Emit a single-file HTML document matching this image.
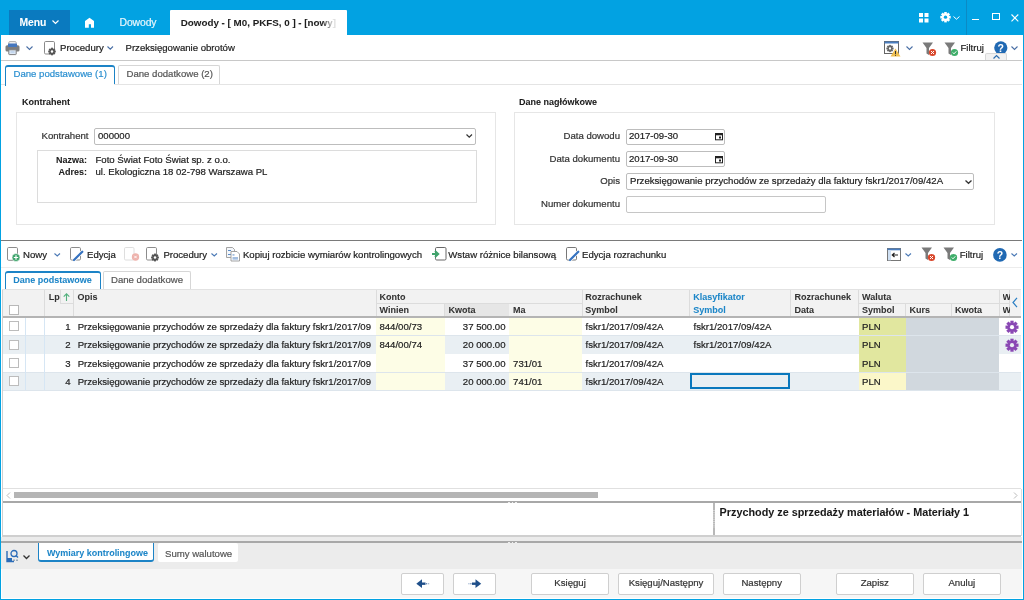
<!DOCTYPE html>
<html><head><meta charset="utf-8">
<style>
*{margin:0;padding:0;box-sizing:border-box}
html,body{width:1024px;height:600px;overflow:hidden;background:#fff}
body{font-family:"Liberation Sans",sans-serif;font-size:9.6px;color:#222;position:relative;-webkit-font-smoothing:antialiased}
.a{position:absolute}
.t{position:absolute;white-space:nowrap;line-height:12px;-webkit-text-stroke:0.2px currentColor}
.b{font-weight:bold;-webkit-text-stroke:0.05px currentColor}
svg{position:absolute;overflow:visible}
</style></head><body>
<div style="position:absolute;left:0;top:0;width:1024px;height:600px;overflow:hidden;background:#fff;will-change:transform">
<div class="a" style="left:0px;top:0px;width:1024px;height:35px;background:#02a2e2"></div>
<div class="a" style="left:9px;top:10px;width:61px;height:25px;background:#0a7abf"></div>
<div class="t b" style="left:19.5px;top:17px;font-size:10.4px;color:#fff;letter-spacing:-0.1px">Menu</div>
<svg style="left:52px;top:19.5px;" width="7" height="4.5" viewBox="0 0 7 4.5"><path d="M0.5 0.5L3.5 3.5L6.5 0.5" fill="none" stroke="#fff" stroke-width="1.2"/></svg>
<svg style="left:84px;top:17px;" width="12" height="12" viewBox="0 0 12 12"><path d="M1 4L5.5 0.7L10 4V10.8H7V7.2H4.8V10.8H1Z" fill="#fff"/></svg>
<div class="t" style="left:119.5px;top:17px;font-size:10.4px;color:#e8f6fc;letter-spacing:-0.1px">Dowody</div>
<div class="a" style="left:170px;top:10px;width:177px;height:25px;background:#fff;border-radius:1px 1px 0 0"></div>
<div class="t b" style="left:180.8px;top:17px;font-size:9.8px;color:#1e1e1e;width:158px;overflow:hidden;">Dowody - [ M0, PKFS, 0 ] - [nowy]</div>
<div class="a" style="left:322px;top:14px;width:14px;height:16px;background:linear-gradient(90deg,rgba(255,255,255,0),rgba(255,255,255,0.85) 80%)"></div>
<svg style="left:919px;top:13px;" width="10" height="10" viewBox="0 0 10 10"><rect x="0" y="0" width="4" height="4" fill="#fff"/><rect x="5.5" y="0" width="4" height="4" fill="#fff"/><rect x="0" y="5.5" width="4" height="4" fill="#fff"/><rect x="5.5" y="5.5" width="4" height="4" fill="#fff"/></svg>
<svg style="left:939px;top:11px;" width="14" height="14" viewBox="0 0 14 14"><circle cx="6.5" cy="6.2" r="3.64" fill="#fff"/><rect x="5.20" y="1.00" width="2.60" height="5.20" fill="#fff" transform="rotate(0.0 6.5 6.2)"/><rect x="5.20" y="1.00" width="2.60" height="5.20" fill="#fff" transform="rotate(45.0 6.5 6.2)"/><rect x="5.20" y="1.00" width="2.60" height="5.20" fill="#fff" transform="rotate(90.0 6.5 6.2)"/><rect x="5.20" y="1.00" width="2.60" height="5.20" fill="#fff" transform="rotate(135.0 6.5 6.2)"/><rect x="5.20" y="1.00" width="2.60" height="5.20" fill="#fff" transform="rotate(180.0 6.5 6.2)"/><rect x="5.20" y="1.00" width="2.60" height="5.20" fill="#fff" transform="rotate(225.0 6.5 6.2)"/><rect x="5.20" y="1.00" width="2.60" height="5.20" fill="#fff" transform="rotate(270.0 6.5 6.2)"/><rect x="5.20" y="1.00" width="2.60" height="5.20" fill="#fff" transform="rotate(315.0 6.5 6.2)"/><circle cx="6.5" cy="6.2" r="1.66" fill="#02a2e2"/></svg>
<svg style="left:953px;top:15.7px;" width="7" height="4.2" viewBox="0 0 7 4.2"><path d="M0.5 0.5L3.5 3.2L6.5 0.5" fill="none" stroke="#fff" stroke-width="1"/></svg>
<div class="a" style="left:966px;top:0px;width:1px;height:35px;background:#0b8ac4"></div>
<div class="a" style="left:972px;top:19px;width:7px;height:1.3px;background:#fff"></div>
<div class="a" style="left:992px;top:13px;width:7.5px;height:7px;border:1.2px solid #fff"></div>
<svg style="left:1011px;top:14px;" width="8" height="8" viewBox="0 0 8 8"><path d="M0.5 0.5L7.3 7.3M7.3 0.5L0.5 7.3" stroke="#fff" stroke-width="1.1"/></svg>
<svg style="left:5px;top:41px;" width="15" height="14" viewBox="0 0 15 14"><rect x="3.8" y="0.6" width="7.4" height="5" rx="1" fill="#f2f2f2" stroke="#9a9a9a" stroke-width="0.8"/><rect x="0.5" y="4.2" width="14" height="6.3" rx="1.6" fill="#7d7d7d"/><rect x="3" y="2.4" width="9" height="3.6" rx="0.6" fill="#4677bd"/><rect x="3.8" y="8.8" width="7.4" height="4.8" rx="0.6" fill="#dce8f6" stroke="#7d7d7d" stroke-width="1"/><rect x="5.5" y="10.6" width="4" height="0.8" fill="#9fbbe0"/></svg>
<svg style="left:26px;top:46px;" width="7" height="4.5" viewBox="0 0 7 4.5"><path d="M0.5 0.5L3.5 3.5L6.5 0.5" fill="none" stroke="#4a6fa5" stroke-width="1.1"/></svg>
<svg style="left:43.5px;top:41px;" width="11" height="13.5" viewBox="0 0 11 13.5"><rect x="0.5" y="0.5" width="10" height="12.5" rx="1.2" fill="#fff" stroke="#8a8a8a" stroke-width="1.0"/></svg>
<svg style="left:47px;top:47px;" width="10" height="10" viewBox="0 0 10 10"><circle cx="5" cy="4.5" r="2.66" fill="#555"/><rect x="4.05" y="0.70" width="1.90" height="3.80" fill="#555" transform="rotate(0.0 5 4.5)"/><rect x="4.05" y="0.70" width="1.90" height="3.80" fill="#555" transform="rotate(45.0 5 4.5)"/><rect x="4.05" y="0.70" width="1.90" height="3.80" fill="#555" transform="rotate(90.0 5 4.5)"/><rect x="4.05" y="0.70" width="1.90" height="3.80" fill="#555" transform="rotate(135.0 5 4.5)"/><rect x="4.05" y="0.70" width="1.90" height="3.80" fill="#555" transform="rotate(180.0 5 4.5)"/><rect x="4.05" y="0.70" width="1.90" height="3.80" fill="#555" transform="rotate(225.0 5 4.5)"/><rect x="4.05" y="0.70" width="1.90" height="3.80" fill="#555" transform="rotate(270.0 5 4.5)"/><rect x="4.05" y="0.70" width="1.90" height="3.80" fill="#555" transform="rotate(315.0 5 4.5)"/><circle cx="5" cy="4.5" r="1.22" fill="#fff"/></svg>
<div class="t" style="left:60px;top:42px;font-size:9.6px;color:#222;">Procedury</div>
<svg style="left:107px;top:46px;" width="6.5" height="4.2" viewBox="0 0 6.5 4.2"><path d="M0.5 0.5L3.25 3.2L6.0 0.5" fill="none" stroke="#4a6fa5" stroke-width="1.1"/></svg>
<div class="t" style="left:125.5px;top:42px;font-size:9.6px;color:#222;">Przeksięgowanie obrotów</div>
<svg style="left:884px;top:41px;" width="18" height="16" viewBox="0 0 18 16"><rect x="0.5" y="0.5" width="14" height="12" fill="#fff" stroke="#666" stroke-width="1"/><rect x="0.5" y="0.5" width="14" height="2" fill="#4a7ec0"/><circle cx="6" cy="7.5" r="2.52" fill="#666"/><rect x="5.10" y="3.90" width="1.80" height="3.60" fill="#666" transform="rotate(0.0 6 7.5)"/><rect x="5.10" y="3.90" width="1.80" height="3.60" fill="#666" transform="rotate(45.0 6 7.5)"/><rect x="5.10" y="3.90" width="1.80" height="3.60" fill="#666" transform="rotate(90.0 6 7.5)"/><rect x="5.10" y="3.90" width="1.80" height="3.60" fill="#666" transform="rotate(135.0 6 7.5)"/><rect x="5.10" y="3.90" width="1.80" height="3.60" fill="#666" transform="rotate(180.0 6 7.5)"/><rect x="5.10" y="3.90" width="1.80" height="3.60" fill="#666" transform="rotate(225.0 6 7.5)"/><rect x="5.10" y="3.90" width="1.80" height="3.60" fill="#666" transform="rotate(270.0 6 7.5)"/><rect x="5.10" y="3.90" width="1.80" height="3.60" fill="#666" transform="rotate(315.0 6 7.5)"/><circle cx="6" cy="7.5" r="1.15" fill="#fff"/><path d="M11.5 7.5L16.5 15.5H6.5Z" fill="#f0c050"/><rect x="11" y="10" width="1" height="3" fill="#333"/><rect x="11" y="13.8" width="1" height="1" fill="#333"/></svg>
<svg style="left:906px;top:46px;" width="7" height="4.5" viewBox="0 0 7 4.5"><path d="M0.5 0.5L3.5 3.5L6.5 0.5" fill="none" stroke="#4a6fa5" stroke-width="1.1"/></svg>
<svg style="left:922px;top:41.5px;" width="15" height="15" viewBox="0 0 15 15"><path d="M0.5 0.5H11L7 6V13L4.5 11.5V6Z" fill="#7a7a7a"/><circle cx="10.5" cy="10.5" r="3.6" fill="#d9472b"/><path d="M9 9L12 12M12 9L9 12" stroke="#fff" stroke-width="1"/></svg>
<svg style="left:944px;top:41.5px;" width="15" height="15" viewBox="0 0 15 15"><path d="M0.5 0.5H11L7 6V13L4.5 11.5V6Z" fill="#7a7a7a"/><circle cx="10.5" cy="10.5" r="3.6" fill="#3fae6a"/><path d="M8.8 10.5L10 11.8L12.3 9.3" fill="none" stroke="#fff" stroke-width="1"/></svg>
<div class="t" style="left:960.5px;top:42px;font-size:9.6px;color:#222;">Filtruj</div>
<svg style="left:994px;top:41px;" width="14" height="14" viewBox="0 0 14 14"><circle cx="6.8" cy="6.8" r="6.6" fill="#2069b3"/><text x="6.8" y="10.6" font-family="Liberation Sans" font-weight="bold" font-size="10.5" fill="#fff" text-anchor="middle">?</text></svg>
<svg style="left:1011px;top:46px;" width="7" height="4.5" viewBox="0 0 7 4.5"><path d="M0.5 0.5L3.5 3.5L6.5 0.5" fill="none" stroke="#4a6fa5" stroke-width="1.1"/></svg>
<div class="a" style="left:985px;top:52.5px;width:22px;height:8px;background:#f2f2f2;border:1px solid #d8d8d8;border-bottom:none;border-radius:2px 2px 0 0"></div>
<svg style="left:992.5px;top:54.5px;" width="7" height="4" viewBox="0 0 7 4"><path d="M0.5 3.5L3.5 0.5L6.5 3.5" fill="none" stroke="#2f6fb0" stroke-width="1.2"/></svg>
<div class="a" style="left:1px;top:60px;width:1021px;height:1px;background:#c8c8c8"></div>
<div class="a" style="left:4.5px;top:64.5px;width:110px;height:19.5px;background:#fff;border:1px solid #1c83c6;border-top:2px solid #1c83c6;border-bottom:none;border-radius:3px 3px 0 0"></div>
<div class="t" style="left:13.5px;top:68px;font-size:9.6px;color:#2a8fd0;">Dane podstawowe (1)</div>
<div class="a" style="left:118px;top:64.5px;width:101.5px;height:19.5px;background:#fff;border:1px solid #d6d6d6;border-bottom:none;border-radius:2px 2px 0 0"></div>
<div class="t" style="left:126.5px;top:68px;font-size:9.6px;color:#555;">Dane dodatkowe (2)</div>
<div class="a" style="left:1px;top:84px;width:1021px;height:155px;background:#fff;border-top:1px solid #e4e4e4"></div>
<div class="a" style="left:5.5px;top:83.5px;width:108px;height:1.5px;background:#fff"></div>
<div class="a" style="left:4.5px;top:84px;width:1px;height:2px;background:#1c83c6"></div>
<div class="t b" style="left:22px;top:96px;font-size:9px;color:#1a1a1a;">Kontrahent</div>
<div class="a" style="left:16px;top:112px;width:480px;height:113px;border:1px solid #e6e6e6"></div>
<div class="t" style="left:8.5px;top:130px;width:80px;text-align:right;font-size:9.6px;color:#333;">Kontrahent</div>
<div class="a" style="left:94px;top:127.5px;width:382px;height:17px;border:1px solid #bdbdbd;border-radius:2px;background:#fff"></div>
<div class="t" style="left:98px;top:130px;font-size:9.6px;color:#222;">000000</div>
<svg style="left:466px;top:134px;" width="6.5" height="4.2" viewBox="0 0 6.5 4.2"><path d="M0.5 0.5L3.25 3.2L6.0 0.5" fill="none" stroke="#333" stroke-width="1.2"/></svg>
<div class="a" style="left:37px;top:150px;width:440px;height:53px;border:1px solid #dcdcdc"></div>
<div class="t b" style="left:27px;top:154px;width:60px;text-align:right;font-size:9px;color:#222;">Nazwa:</div>
<div class="t b" style="left:27px;top:166px;width:60px;text-align:right;font-size:9px;color:#222;">Adres:</div>
<div class="t" style="left:95.5px;top:154px;font-size:9.6px;color:#222;">Foto Świat Foto Świat sp. z o.o.</div>
<div class="t" style="left:95.5px;top:166px;font-size:9.6px;color:#222;">ul. Ekologiczna 18 02-798 Warszawa PL</div>
<div class="t b" style="left:519px;top:96px;font-size:9px;color:#1a1a1a;">Dane nagłówkowe</div>
<div class="a" style="left:513.5px;top:112px;width:481.5px;height:113px;border:1px solid #e6e6e6"></div>
<div class="t" style="left:520px;top:130px;width:100px;text-align:right;font-size:9.6px;color:#333;">Data dowodu</div>
<div class="t" style="left:520px;top:153px;width:100px;text-align:right;font-size:9.6px;color:#333;">Data dokumentu</div>
<div class="t" style="left:520px;top:175px;width:100px;text-align:right;font-size:9.6px;color:#333;">Opis</div>
<div class="t" style="left:520px;top:198px;width:100px;text-align:right;font-size:9.6px;color:#333;">Numer dokumentu</div>
<div class="a" style="left:625.5px;top:128.5px;width:99.5px;height:16px;border:1px solid #bdbdbd;border-radius:2px"></div>
<div class="t" style="left:629px;top:130px;font-size:9.6px;color:#222;">2017-09-30</div>
<svg style="left:714.5px;top:133px;" width="8" height="7" viewBox="0 0 8 7"><rect x="0.5" y="0.5" width="7" height="6.3" fill="none" stroke="#222" stroke-width="1"/><rect x="0.5" y="0.5" width="7" height="1.8" fill="#222"/><rect x="4" y="3.5" width="2" height="2" fill="#222"/></svg>
<div class="a" style="left:625.5px;top:151px;width:99.5px;height:16px;border:1px solid #bdbdbd;border-radius:2px"></div>
<div class="t" style="left:629px;top:153px;font-size:9.6px;color:#222;">2017-09-30</div>
<svg style="left:714.5px;top:155.5px;" width="8" height="7" viewBox="0 0 8 7"><rect x="0.5" y="0.5" width="7" height="6.3" fill="none" stroke="#222" stroke-width="1"/><rect x="0.5" y="0.5" width="7" height="1.8" fill="#222"/><rect x="4" y="3.5" width="2" height="2" fill="#222"/></svg>
<div class="a" style="left:626px;top:172.5px;width:348px;height:17px;border:1px solid #bdbdbd;border-radius:2px"></div>
<div class="t" style="left:630px;top:175px;font-size:9.6px;color:#222;">Przeksięgowanie przychodów ze sprzedaży dla faktury fskr1/2017/09/42A</div>
<svg style="left:964.5px;top:179.5px;" width="7" height="4.3" viewBox="0 0 7 4.3"><path d="M0.5 0.5L3.5 3.3L6.5 0.5" fill="none" stroke="#333" stroke-width="1.3"/></svg>
<div class="a" style="left:626px;top:195.5px;width:200px;height:17px;border:1px solid #c6c6c6;border-radius:2px"></div>
<div class="a" style="left:1px;top:239.5px;width:1021px;height:1.5px;background:#7a7a7a"></div>
<svg style="left:7px;top:247px;" width="16" height="15" viewBox="0 0 16 15"><rect x="0.5" y="0.5" width="10" height="12.8" rx="1.2" fill="#fff" stroke="#8c8c8c" stroke-width="1"/><circle cx="9" cy="10.5" r="4" fill="#3fa46c" stroke="#fff" stroke-width="0.6"/><path d="M6.8 10.5H11.2M9 8.3V12.7" stroke="#fff" stroke-width="1.2"/></svg>
<div class="t" style="left:23px;top:249px;font-size:9.6px;color:#222;">Nowy</div>
<svg style="left:54px;top:252.5px;" width="6.5" height="4" viewBox="0 0 6.5 4"><path d="M0.5 0.5L3.25 3L6.0 0.5" fill="none" stroke="#4a78b5" stroke-width="1.1"/></svg>
<svg style="left:70px;top:247px;" width="15" height="15" viewBox="0 0 15 15"><rect x="0.5" y="0.5" width="10" height="12.5" rx="1.2" fill="#fff" stroke="#8c8c8c" stroke-width="1"/><path d="M3.5 13.5L12.5 4.5" stroke="#fff" stroke-width="3.4"/><path d="M4 13L12.3 4.7" stroke="#3572c0" stroke-width="2.2" stroke-linecap="round"/></svg>
<div class="t" style="left:87px;top:249px;font-size:9.6px;color:#222;">Edycja</div>
<svg style="left:124px;top:247px;" width="15" height="15" viewBox="0 0 15 15"><rect x="0.5" y="0.5" width="9.5" height="12.5" rx="1.2" fill="#fff" stroke="#dedede" stroke-width="1"/><circle cx="11.5" cy="10" r="3.7" fill="#eeb3ad"/><path d="M10.3 8.8L12.7 11.2M12.7 8.8L10.3 11.2" stroke="#fff" stroke-width="0.9"/></svg>
<svg style="left:146px;top:247px;" width="11" height="13.5" viewBox="0 0 11 13.5"><rect x="0.5" y="0.5" width="10" height="12.5" rx="1.2" fill="#fff" stroke="#8c8c8c" stroke-width="1.0"/></svg>
<svg style="left:146px;top:247px;" width="16" height="16" viewBox="0 0 16 16"><circle cx="9" cy="10.5" r="2.73" fill="#555"/><rect x="8.03" y="6.60" width="1.95" height="3.90" fill="#555" transform="rotate(0.0 9 10.5)"/><rect x="8.03" y="6.60" width="1.95" height="3.90" fill="#555" transform="rotate(45.0 9 10.5)"/><rect x="8.03" y="6.60" width="1.95" height="3.90" fill="#555" transform="rotate(90.0 9 10.5)"/><rect x="8.03" y="6.60" width="1.95" height="3.90" fill="#555" transform="rotate(135.0 9 10.5)"/><rect x="8.03" y="6.60" width="1.95" height="3.90" fill="#555" transform="rotate(180.0 9 10.5)"/><rect x="8.03" y="6.60" width="1.95" height="3.90" fill="#555" transform="rotate(225.0 9 10.5)"/><rect x="8.03" y="6.60" width="1.95" height="3.90" fill="#555" transform="rotate(270.0 9 10.5)"/><rect x="8.03" y="6.60" width="1.95" height="3.90" fill="#555" transform="rotate(315.0 9 10.5)"/><circle cx="9" cy="10.5" r="1.25" fill="#fff"/></svg>
<div class="t" style="left:163.4px;top:249px;font-size:9.6px;color:#222;">Procedury</div>
<svg style="left:211px;top:252.5px;" width="6.5" height="4" viewBox="0 0 6.5 4"><path d="M0.5 0.5L3.25 3L6.0 0.5" fill="none" stroke="#4a78b5" stroke-width="1.1"/></svg>
<svg style="left:226px;top:247px;" width="15" height="15" viewBox="0 0 15 15"><path d="M0.5 0.5H6.5L8.5 2.5V10.5H0.5Z" fill="#f4f7fb" stroke="#999" stroke-width="0.9"/><rect x="2" y="3" width="3" height="0.9" fill="#4a80c4"/><rect x="2" y="7" width="3" height="0.9" fill="#4a80c4"/><path d="M5 4.5H11L13.5 7V14H5Z" fill="#fff" stroke="#999" stroke-width="0.9"/><rect x="6.5" y="7.5" width="2" height="0.9" fill="#4a80c4"/><rect x="6.5" y="10.5" width="5.5" height="1" fill="#4a80c4"/><rect x="6.5" y="12.3" width="5.5" height="0.8" fill="#a9c4e6"/></svg>
<div class="t" style="left:242.9px;top:249px;font-size:9.6px;color:#222;">Kopiuj rozbicie wymiarów kontrolingowych</div>
<svg style="left:432px;top:247px;" width="15" height="15" viewBox="0 0 15 15"><rect x="3.5" y="0.5" width="10.5" height="12.5" rx="1.2" fill="#fff" stroke="#666" stroke-width="1"/><path d="M0 7H5.5M3 4L6.3 7L3 10" fill="none" stroke="#3fa46c" stroke-width="1.9"/></svg>
<div class="t" style="left:448.3px;top:249px;font-size:9.6px;color:#222;">Wstaw różnice bilansową</div>
<svg style="left:566px;top:247px;" width="15" height="15" viewBox="0 0 15 15"><rect x="0.5" y="0.5" width="10" height="12.5" rx="1.2" fill="#fff" stroke="#777" stroke-width="1"/><path d="M3.5 13.5L12.5 4.5" stroke="#fff" stroke-width="3.4"/><path d="M4 13L12.3 4.7" stroke="#3572c0" stroke-width="2.2" stroke-linecap="round"/></svg>
<div class="t" style="left:582px;top:249px;font-size:9.6px;color:#222;">Edycja rozrachunku</div>
<svg style="left:886.5px;top:247.5px;" width="15" height="14" viewBox="0 0 15 14"><rect x="0.5" y="0.5" width="13" height="12" fill="#fff" stroke="#777" stroke-width="1"/><rect x="0.5" y="0.5" width="13" height="1.8" fill="#4a7ec0"/><rect x="1" y="2.3" width="3" height="10" fill="#cfe0f3"/><path d="M5 7H11M7.5 5L5.3 7L7.5 9" fill="none" stroke="#222" stroke-width="1.2"/></svg>
<svg style="left:905px;top:252.5px;" width="6.5" height="4" viewBox="0 0 6.5 4"><path d="M0.5 0.5L3.25 3L6.0 0.5" fill="none" stroke="#4a78b5" stroke-width="1.1"/></svg>
<svg style="left:920.5px;top:247px;" width="15" height="15" viewBox="0 0 15 15"><path d="M0.5 0.5H11L7 6V13L4.5 11.5V6Z" fill="#7a7a7a"/><circle cx="10.5" cy="10.5" r="3.6" fill="#d9472b"/><path d="M9 9L12 12M12 9L9 12" stroke="#fff" stroke-width="1"/></svg>
<svg style="left:942.5px;top:247px;" width="15" height="15" viewBox="0 0 15 15"><path d="M0.5 0.5H11L7 6V13L4.5 11.5V6Z" fill="#7a7a7a"/><circle cx="10.5" cy="10.5" r="3.6" fill="#3fae6a"/><path d="M8.8 10.5L10 11.8L12.3 9.3" fill="none" stroke="#fff" stroke-width="1"/></svg>
<div class="t" style="left:959.7px;top:249px;font-size:9.6px;color:#222;">Filtruj</div>
<svg style="left:992.5px;top:247.5px;" width="14" height="14" viewBox="0 0 14 14"><circle cx="6.9" cy="6.9" r="6.8" fill="#2069b3"/><text x="6.9" y="10.7" font-family="Liberation Sans" font-weight="bold" font-size="10.5" fill="#fff" text-anchor="middle">?</text></svg>
<svg style="left:1011px;top:252.5px;" width="6.5" height="4" viewBox="0 0 6.5 4"><path d="M0.5 0.5L3.25 3L6.0 0.5" fill="none" stroke="#4a78b5" stroke-width="1.1"/></svg>
<div class="a" style="left:1px;top:267px;width:1021px;height:1px;background:#ececec"></div>
<div class="a" style="left:4.5px;top:270.8px;width:96px;height:19.5px;background:#fff;border:1px solid #1c83c6;border-top:2px solid #1c83c6;border-bottom:none;border-radius:3px 3px 0 0"></div>
<div class="t b" style="left:13.3px;top:274px;font-size:9px;color:#1e86c8;">Dane podstawowe</div>
<div class="a" style="left:102.5px;top:270.8px;width:88px;height:19.2px;background:#fff;border:1px solid #d6d6d6;border-bottom:none;border-radius:2px 2px 0 0"></div>
<div class="t" style="left:111px;top:274px;font-size:9.6px;color:#555;">Dane dodatkowe</div>
<div class="a" style="left:2px;top:289px;width:1019px;height:27.5px;background:#f2f2f2;border-top:1px solid #e2e2e2"></div>
<div class="a" style="left:2px;top:316px;width:1019px;height:1.8px;background:#b4b4b4"></div>
<div class="a" style="left:44px;top:290px;width:1px;height:26px;background:#dcdcdc"></div>
<div class="a" style="left:73px;top:290px;width:1px;height:26px;background:#dcdcdc"></div>
<div class="a" style="left:375.5px;top:290px;width:1px;height:26px;background:#dcdcdc"></div>
<div class="a" style="left:376px;top:303px;width:206px;height:1px;background:#dcdcdc"></div>
<div class="a" style="left:444px;top:303px;width:1px;height:13px;background:#dcdcdc"></div>
<div class="a" style="left:508px;top:303px;width:1px;height:13px;background:#dcdcdc"></div>
<div class="a" style="left:582px;top:290px;width:1px;height:26px;background:#dcdcdc"></div>
<div class="a" style="left:689px;top:290px;width:1px;height:26px;background:#dcdcdc"></div>
<div class="a" style="left:790px;top:290px;width:1px;height:26px;background:#dcdcdc"></div>
<div class="a" style="left:858px;top:290px;width:1px;height:26px;background:#dcdcdc"></div>
<div class="a" style="left:858px;top:303px;width:151px;height:1px;background:#dcdcdc"></div>
<div class="a" style="left:905px;top:303px;width:1px;height:13px;background:#dcdcdc"></div>
<div class="a" style="left:951px;top:303px;width:1px;height:13px;background:#dcdcdc"></div>
<div class="a" style="left:999px;top:290px;width:1px;height:26px;background:#dcdcdc"></div>
<div class="a" style="left:1009px;top:290px;width:1px;height:26px;background:#dcdcdc"></div>
<div class="a" style="left:445px;top:304px;width:63.5px;height:12px;background:#e6e6e6"></div>
<div class="a" style="left:59.5px;top:290px;width:14px;height:13.5px;border-left:1px solid #dcdcdc;border-bottom:1px solid #dcdcdc"></div>
<svg style="left:62px;top:292px;" width="10" height="10" viewBox="0 0 10 10"><path d="M4.5 9V2M1.7 4.7L4.5 1.8L7.3 4.7" fill="none" stroke="#52b07c" stroke-width="1.1"/></svg>
<div class="a" style="left:9px;top:304.5px;width:10px;height:10px;background:#fff;border:1px solid #b8b8b8"></div>
<div class="t b" style="left:48.8px;top:291px;font-size:9px;color:#333;">Lp</div>
<div class="t b" style="left:77.5px;top:291px;font-size:9px;color:#333;">Opis</div>
<div class="t b" style="left:379.5px;top:291px;font-size:9px;color:#333;">Konto</div>
<div class="t b" style="left:379.5px;top:304px;font-size:9px;color:#333;">Winien</div>
<div class="t b" style="left:448.5px;top:304px;font-size:9px;color:#333;">Kwota</div>
<div class="t b" style="left:513px;top:304px;font-size:9px;color:#333;">Ma</div>
<div class="t b" style="left:585.3px;top:291px;font-size:9px;color:#333;">Rozrachunek</div>
<div class="t b" style="left:585.3px;top:304px;font-size:9px;color:#333;">Symbol</div>
<div class="t b" style="left:693.3px;top:291px;font-size:9px;color:#1c86c8;">Klasyfikator</div>
<div class="t b" style="left:693.3px;top:304px;font-size:9px;color:#1c86c8;">Symbol</div>
<div class="t b" style="left:794.5px;top:291px;font-size:9px;color:#333;">Rozrachunek</div>
<div class="t b" style="left:794.5px;top:304px;font-size:9px;color:#333;">Data</div>
<div class="t b" style="left:862px;top:291px;font-size:9px;color:#333;">Waluta</div>
<div class="t b" style="left:862px;top:304px;font-size:9px;color:#333;">Symbol</div>
<div class="t b" style="left:909.5px;top:304px;font-size:9px;color:#333;">Kurs</div>
<div class="t b" style="left:955px;top:304px;font-size:9px;color:#333;">Kwota</div>
<div class="t b" style="left:1002.5px;top:291px;font-size:9px;color:#333;width:7px;overflow:hidden;">W</div>
<div class="t b" style="left:1002.5px;top:304px;font-size:9px;color:#333;width:7px;overflow:hidden;">W</div>
<svg style="left:1012px;top:297px;" width="6" height="11" viewBox="0 0 6 11"><path d="M5 0.8L1 5.5L5 10.2" fill="none" stroke="#2a7fc4" stroke-width="1.2"/></svg>
<div class="a" style="left:2px;top:317.5px;width:1019px;height:18.4px;background:#fff"></div>
<div class="a" style="left:376px;top:317.5px;width:68.5px;height:18.4px;background:#fdfde6"></div>
<div class="a" style="left:509px;top:317.5px;width:73px;height:18.4px;background:#fdfde6"></div>
<div class="a" style="left:858.5px;top:317.5px;width:47.4px;height:18.4px;background:#e1e79f"></div>
<div class="a" style="left:906px;top:317.5px;width:93px;height:18.4px;background:#d1d8de"></div>
<div class="a" style="left:2px;top:335.09999999999997px;width:1019px;height:1px;background:#dde5ec"></div>
<div class="t" style="left:50.5px;top:321px;width:20px;text-align:right;font-size:9.6px;color:#222;">1</div>
<div class="t" style="left:77.7px;top:321px;font-size:9.6px;color:#222;width:296px;overflow:hidden;">Przeksięgowanie przychodów ze sprzedaży dla faktury fskr1/2017/09</div>
<div class="t" style="left:379.4px;top:321px;font-size:9.6px;color:#222;">844/00/73</div>
<div class="t" style="left:445.5px;top:321px;width:60px;text-align:right;font-size:9.6px;color:#222;">37 500.00</div>
<div class="t" style="left:513.1px;top:321px;font-size:9.6px;color:#222;"></div>
<div class="t" style="left:585.5px;top:321px;font-size:9.6px;color:#222;">fskr1/2017/09/42A</div>
<div class="t" style="left:693.5px;top:321px;font-size:9.6px;color:#222;">fskr1/2017/09/42A</div>
<div class="t" style="left:862px;top:321px;font-size:9.6px;color:#222;">PLN</div>
<div class="a" style="left:9px;top:321.1px;width:10px;height:10px;background:#fff;border:1px solid #bcbcbc"></div>
<svg style="left:1004px;top:319.5px;" width="16" height="16" viewBox="0 0 16 16"><circle cx="8" cy="7.2" r="4.55" fill="#8a48b4"/><rect x="6.38" y="0.70" width="3.25" height="6.50" fill="#8a48b4" transform="rotate(0.0 8 7.2)"/><rect x="6.38" y="0.70" width="3.25" height="6.50" fill="#8a48b4" transform="rotate(45.0 8 7.2)"/><rect x="6.38" y="0.70" width="3.25" height="6.50" fill="#8a48b4" transform="rotate(90.0 8 7.2)"/><rect x="6.38" y="0.70" width="3.25" height="6.50" fill="#8a48b4" transform="rotate(135.0 8 7.2)"/><rect x="6.38" y="0.70" width="3.25" height="6.50" fill="#8a48b4" transform="rotate(180.0 8 7.2)"/><rect x="6.38" y="0.70" width="3.25" height="6.50" fill="#8a48b4" transform="rotate(225.0 8 7.2)"/><rect x="6.38" y="0.70" width="3.25" height="6.50" fill="#8a48b4" transform="rotate(270.0 8 7.2)"/><rect x="6.38" y="0.70" width="3.25" height="6.50" fill="#8a48b4" transform="rotate(315.0 8 7.2)"/><circle cx="8" cy="7.2" r="2.08" fill="#fff"/></svg>
<div class="a" style="left:2px;top:335.9px;width:1019px;height:18.4px;background:#e9eff3"></div>
<div class="a" style="left:376px;top:335.9px;width:68.5px;height:18.4px;background:#fdfde6"></div>
<div class="a" style="left:509px;top:335.9px;width:73px;height:18.4px;background:#fdfde6"></div>
<div class="a" style="left:858.5px;top:335.9px;width:47.4px;height:18.4px;background:#e1e79f"></div>
<div class="a" style="left:906px;top:335.9px;width:93px;height:18.4px;background:#d1d8de"></div>
<div class="a" style="left:2px;top:353.49999999999994px;width:1019px;height:1px;background:#dde5ec"></div>
<div class="t" style="left:50.5px;top:339px;width:20px;text-align:right;font-size:9.6px;color:#222;">2</div>
<div class="t" style="left:77.7px;top:339px;font-size:9.6px;color:#222;width:296px;overflow:hidden;">Przeksięgowanie przychodów ze sprzedaży dla faktury fskr1/2017/09</div>
<div class="t" style="left:379.4px;top:339px;font-size:9.6px;color:#222;">844/00/74</div>
<div class="t" style="left:445.5px;top:339px;width:60px;text-align:right;font-size:9.6px;color:#222;">20 000.00</div>
<div class="t" style="left:513.1px;top:339px;font-size:9.6px;color:#222;"></div>
<div class="t" style="left:585.5px;top:339px;font-size:9.6px;color:#222;">fskr1/2017/09/42A</div>
<div class="t" style="left:693.5px;top:339px;font-size:9.6px;color:#222;">fskr1/2017/09/42A</div>
<div class="t" style="left:862px;top:339px;font-size:9.6px;color:#222;">PLN</div>
<div class="a" style="left:9px;top:339.5px;width:10px;height:10px;background:#fff;border:1px solid #bcbcbc"></div>
<svg style="left:1004px;top:337.9px;" width="16" height="16" viewBox="0 0 16 16"><circle cx="8" cy="7.2" r="4.55" fill="#8a48b4"/><rect x="6.38" y="0.70" width="3.25" height="6.50" fill="#8a48b4" transform="rotate(0.0 8 7.2)"/><rect x="6.38" y="0.70" width="3.25" height="6.50" fill="#8a48b4" transform="rotate(45.0 8 7.2)"/><rect x="6.38" y="0.70" width="3.25" height="6.50" fill="#8a48b4" transform="rotate(90.0 8 7.2)"/><rect x="6.38" y="0.70" width="3.25" height="6.50" fill="#8a48b4" transform="rotate(135.0 8 7.2)"/><rect x="6.38" y="0.70" width="3.25" height="6.50" fill="#8a48b4" transform="rotate(180.0 8 7.2)"/><rect x="6.38" y="0.70" width="3.25" height="6.50" fill="#8a48b4" transform="rotate(225.0 8 7.2)"/><rect x="6.38" y="0.70" width="3.25" height="6.50" fill="#8a48b4" transform="rotate(270.0 8 7.2)"/><rect x="6.38" y="0.70" width="3.25" height="6.50" fill="#8a48b4" transform="rotate(315.0 8 7.2)"/><circle cx="8" cy="7.2" r="2.08" fill="#e9eff3"/></svg>
<div class="a" style="left:2px;top:354.3px;width:1019px;height:18.4px;background:#fff"></div>
<div class="a" style="left:376px;top:354.3px;width:68.5px;height:18.4px;background:#fdfde6"></div>
<div class="a" style="left:509px;top:354.3px;width:73px;height:18.4px;background:#fdfde6"></div>
<div class="a" style="left:858.5px;top:354.3px;width:47.4px;height:18.4px;background:#e1e79f"></div>
<div class="a" style="left:906px;top:354.3px;width:93px;height:18.4px;background:#d1d8de"></div>
<div class="a" style="left:2px;top:371.9px;width:1019px;height:1px;background:#dde5ec"></div>
<div class="t" style="left:50.5px;top:358px;width:20px;text-align:right;font-size:9.6px;color:#222;">3</div>
<div class="t" style="left:77.7px;top:358px;font-size:9.6px;color:#222;width:296px;overflow:hidden;">Przeksięgowanie przychodów ze sprzedaży dla faktury fskr1/2017/09</div>
<div class="t" style="left:379.4px;top:358px;font-size:9.6px;color:#222;"></div>
<div class="t" style="left:445.5px;top:358px;width:60px;text-align:right;font-size:9.6px;color:#222;">37 500.00</div>
<div class="t" style="left:513.1px;top:358px;font-size:9.6px;color:#222;">731/01</div>
<div class="t" style="left:585.5px;top:358px;font-size:9.6px;color:#222;">fskr1/2017/09/42A</div>
<div class="t" style="left:693.5px;top:358px;font-size:9.6px;color:#222;"></div>
<div class="t" style="left:862px;top:358px;font-size:9.6px;color:#222;">PLN</div>
<div class="a" style="left:9px;top:357.90000000000003px;width:10px;height:10px;background:#fff;border:1px solid #bcbcbc"></div>
<div class="a" style="left:2px;top:372.7px;width:1019px;height:17.6px;background:#e9eff3"></div>
<div class="a" style="left:376px;top:372.7px;width:68.5px;height:17.6px;background:#fdfde6"></div>
<div class="a" style="left:509px;top:372.7px;width:73px;height:17.6px;background:#fdfde6"></div>
<div class="a" style="left:858.5px;top:372.7px;width:47.4px;height:17.6px;background:#fbf7c9"></div>
<div class="a" style="left:906px;top:372.7px;width:93px;height:17.6px;background:#d1d8de"></div>
<div class="a" style="left:2px;top:389.5px;width:1019px;height:1px;background:#dde5ec"></div>
<div class="t" style="left:50.5px;top:376px;width:20px;text-align:right;font-size:9.6px;color:#222;">4</div>
<div class="t" style="left:77.7px;top:376px;font-size:9.6px;color:#222;width:296px;overflow:hidden;">Przeksięgowanie przychodów ze sprzedaży dla faktury fskr1/2017/09</div>
<div class="t" style="left:379.4px;top:376px;font-size:9.6px;color:#222;"></div>
<div class="t" style="left:445.5px;top:376px;width:60px;text-align:right;font-size:9.6px;color:#222;">20 000.00</div>
<div class="t" style="left:513.1px;top:376px;font-size:9.6px;color:#222;">741/01</div>
<div class="t" style="left:585.5px;top:376px;font-size:9.6px;color:#222;">fskr1/2017/09/42A</div>
<div class="t" style="left:693.5px;top:376px;font-size:9.6px;color:#222;"></div>
<div class="t" style="left:862px;top:376px;font-size:9.6px;color:#222;">PLN</div>
<div class="a" style="left:9px;top:376.3px;width:10px;height:10px;background:#fff;border:1px solid #bcbcbc"></div>
<div class="a" style="left:25px;top:317.5px;width:1px;height:72.3px;background:#d6e6f4"></div>
<div class="a" style="left:44px;top:317.5px;width:1px;height:72.3px;background:#d6e6f4"></div>
<div class="a" style="left:690px;top:372.9px;width:100.4px;height:16.5px;border:2px solid #0a78bd"></div>
<div class="a" style="left:2px;top:488.3px;width:1019px;height:1.2px;background:#e0e0e0"></div>
<div class="a" style="left:2px;top:489.5px;width:1019px;height:12px;background:#fff"></div>
<div class="a" style="left:14px;top:492px;width:583.5px;height:6px;background:#b5b5b5"></div>
<svg style="left:6px;top:491.5px;" width="5" height="7" viewBox="0 0 5 7"><path d="M4 0.5L1 3.5L4 6.5" fill="none" stroke="#bbb" stroke-width="1"/></svg>
<svg style="left:1013px;top:491.5px;" width="5" height="7" viewBox="0 0 5 7"><path d="M1 0.5L4 3.5L1 6.5" fill="none" stroke="#bbb" stroke-width="1"/></svg>
<div class="a" style="left:2px;top:500.8px;width:1019px;height:1.8px;background:#a8a8a8"></div>
<div class="a" style="left:2px;top:502.6px;width:1019px;height:33px;background:#fff"></div>
<div class="a" style="left:712.8px;top:502.6px;width:2px;height:33px;background:#b8b8b8"></div>
<svg style="left:713px;top:510px;" width="2" height="18" viewBox="0 0 2 18"><path d="M1 0V18" stroke="#fff" stroke-width="0.8" stroke-dasharray="1 1.2"/></svg>
<div class="t b" style="left:719.6px;top:506px;font-size:10.8px;color:#1a1a1a;letter-spacing:0.01px">Przychody ze sprzedaży materiałów - Materiały 1</div>
<div class="a" style="left:1020.5px;top:489px;width:1px;height:47px;background:#dcdcdc"></div>
<div class="a" style="left:2px;top:535.4px;width:1019px;height:1.6px;background:#cfcfcf"></div>
<div class="a" style="left:1.3px;top:537px;width:1021px;height:4px;background:#ebebeb"></div>
<div class="a" style="left:1px;top:540.8px;width:1021px;height:1.8px;background:#a8a8a8"></div>
<div class="a" style="left:1.5px;top:290px;width:0.8px;height:246px;background:#d0d0d0"></div>
<div class="a" style="left:1.3px;top:542.6px;width:1021px;height:26.2px;background:#ececec"></div>
<svg style="left:6px;top:549px;" width="14" height="14" viewBox="0 0 14 14"><path d="M1 2V12.5H8" fill="none" stroke="#2b6cb8" stroke-width="1.4"/><rect x="1" y="9" width="5" height="4" fill="#2b6cb8"/><circle cx="8" cy="4.5" r="3" fill="none" stroke="#2b6cb8" stroke-width="1.3"/><path d="M10 6.5L12 8.5" stroke="#2b6cb8" stroke-width="1.4"/><rect x="7" y="10.5" width="2" height="1.5" fill="#9ab"/><rect x="10" y="10.5" width="2" height="1.5" fill="#9ab"/></svg>
<svg style="left:23px;top:555px;" width="7" height="4.5" viewBox="0 0 7 4.5"><path d="M0.5 0.5L3.5 3.5L6.5 0.5" fill="none" stroke="#333" stroke-width="1.3"/></svg>
<div class="a" style="left:38.2px;top:542.6px;width:116.3px;height:19.9px;background:#fff;border:1px solid #1c83c6;border-top:none;border-bottom:2px solid #1c83c6;border-radius:0 0 3px 3px"></div>
<div class="t b" style="left:46.5px;top:547px;font-size:9.6px;color:#1e86c8;transform:scaleX(0.935);transform-origin:0 0">Wymiary kontrolingowe</div>
<div class="a" style="left:157.5px;top:543.4px;width:80.5px;height:18.3px;background:#fff;border-radius:2px"></div>
<div class="t" style="left:165px;top:548px;font-size:9.6px;color:#555;">Sumy walutowe</div>
<div class="a" style="left:1.5px;top:568.8px;width:1020.5px;height:29.4px;background:#f6f6f6"></div>
<div class="a" style="left:400.6px;top:573.3px;width:43.19999999999999px;height:21.5px;background:#fff;border:1px solid #cfcfcf;border-radius:2px"></div>
<svg style="left:415.70000000000005px;top:578.8px;" width="14" height="10" viewBox="0 0 14 10"><path d="M0.3 4.7L6 0.3V9.1Z" fill="#1f4f8a"/><rect x="5.5" y="3.5" width="4" height="2.4" fill="#1f4f8a"/><rect x="10" y="4" width="1.2" height="1.4" fill="#6a8ab5"/><rect x="12" y="4" width="1.2" height="1.4" fill="#a9bcd6"/></svg>
<div class="a" style="left:453px;top:573.3px;width:43.19999999999999px;height:21.5px;background:#fff;border:1px solid #cfcfcf;border-radius:2px"></div>
<svg style="left:468.1px;top:578.8px;" width="14" height="10" viewBox="0 0 14 10"><path d="M13.2 4.7L7.5 0.3V9.1Z" fill="#1f4f8a"/><rect x="4" y="3.5" width="4" height="2.4" fill="#1f4f8a"/><rect x="2.3" y="4" width="1.2" height="1.4" fill="#6a8ab5"/><rect x="0.3" y="4" width="1.2" height="1.4" fill="#a9bcd6"/></svg>
<div class="a" style="left:531.1px;top:573.3px;width:78.0px;height:21.5px;background:#fff;border:1px solid #cfcfcf;border-radius:2px"></div>
<div class="t" style="left:531.1px;top:577px;width:78.0px;text-align:right;font-size:9.6px;color:#333;text-align:center">Księguj</div>
<div class="a" style="left:618.4px;top:573.3px;width:95.30000000000007px;height:21.5px;background:#fff;border:1px solid #cfcfcf;border-radius:2px"></div>
<div class="t" style="left:618.4px;top:577px;width:95.30000000000007px;text-align:right;font-size:9.6px;color:#333;text-align:center">Księguj/Następny</div>
<div class="a" style="left:722.8px;top:573.3px;width:77.80000000000007px;height:21.5px;background:#fff;border:1px solid #cfcfcf;border-radius:2px"></div>
<div class="t" style="left:722.8px;top:577px;width:77.80000000000007px;text-align:right;font-size:9.6px;color:#333;text-align:center">Następny</div>
<div class="a" style="left:836px;top:573.3px;width:77.60000000000002px;height:21.5px;background:#fff;border:1px solid #cfcfcf;border-radius:2px"></div>
<div class="t" style="left:836.0px;top:577px;width:77.60000000000002px;text-align:right;font-size:9.6px;color:#333;text-align:center">Zapisz</div>
<div class="a" style="left:923px;top:573.3px;width:77.60000000000002px;height:21.5px;background:#fff;border:1px solid #cfcfcf;border-radius:2px"></div>
<div class="t" style="left:923.0px;top:577px;width:77.60000000000002px;text-align:right;font-size:9.6px;color:#333;text-align:center">Anuluj</div>
<div class="a" style="left:0px;top:35px;width:1.3px;height:565px;background:#02a2e2"></div>
<div class="a" style="left:1022.6px;top:35px;width:1.4px;height:565px;background:#02a2e2"></div>
<div class="a" style="left:0px;top:598.6px;width:1024px;height:1.4px;background:#02a2e2"></div>
<div class="a" style="left:508px;top:541.6px;width:1.8px;height:1.2px;background:#eeeeee"></div>
<div class="a" style="left:508px;top:501.5px;width:1.8px;height:1.2px;background:#eeeeee"></div>
<div class="a" style="left:511.5px;top:541.6px;width:1.8px;height:1.2px;background:#eeeeee"></div>
<div class="a" style="left:511.5px;top:501.5px;width:1.8px;height:1.2px;background:#eeeeee"></div>
<div class="a" style="left:515px;top:541.6px;width:1.8px;height:1.2px;background:#eeeeee"></div>
<div class="a" style="left:515px;top:501.5px;width:1.8px;height:1.2px;background:#eeeeee"></div>
</div></body></html>
